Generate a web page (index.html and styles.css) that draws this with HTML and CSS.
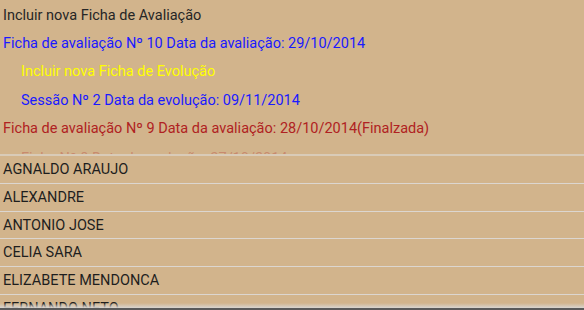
FILE: index.html
```html
<!DOCTYPE html>
<html>
<head>
<meta charset="utf-8">
<link rel="stylesheet" href="styles.css">
</head>
<body>
<div class="screen">
  <ul class="tree">
    <li class="item dark">Incluir nova Ficha de Avaliação</li>
    <li class="item blue">Ficha de avaliação Nº 10 Data da avaliação: 29/10/2014</li>
    <li class="item yellow sub">Incluir nova Ficha de Evolução</li>
    <li class="item blue sub">Sessão Nº 2 Data da evolução: 09/11/2014</li>
    <li class="item red">Ficha de avaliação Nº 9 Data da avaliação: 28/10/2014(Finalzada)</li>
    <li class="item red sub faded">Ficha Nº 8 Data da evolução: 27/10/2014</li>
  </ul>
  <div class="popup">
    <ul class="names">
      <li class="name">AGNALDO ARAUJO</li>
      <li class="name">ALEXANDRE</li>
      <li class="name">ANTONIO JOSE</li>
      <li class="name">CELIA SARA</li>
      <li class="name">ELIZABETE MENDONCA</li>
      <li class="name">FERNANDO NETO</li>
    </ul>
    <div class="fade"></div>
    <div class="edge"></div>
  </div>
</div>
</body>
</html>
```
FILE: styles.css
```css
html, body {
  margin: 0;
  padding: 0;
  background: #d2b48c;
}
.screen {
  position: relative;
  width: 584px;
  height: 310px;
  overflow: hidden;
  background: #d2b48c;
  font-family: Roboto, "Noto Sans", sans-serif;
  font-size: 14.5px;
}
.tree {
  list-style: none;
  margin: 0;
  padding: 2px 0 0 0;
}
.item {
  height: 28.2px;
  line-height: 28px;
  padding-left: 3px;
  white-space: nowrap;
}
.item.sub {
  padding-left: 21px;
}
.dark { color: #262626; }
.blue { color: #1a1aff; }
.yellow { color: #ffff00; }
.red { color: #b02222; }
.faded {
  opacity: 0.28;
  padding-top: 2px;
}

.popup {
  position: absolute;
  top: 154px;
  left: 0;
  right: 0;
  bottom: 0;
  background: #d2b48c;
  border-top: 2px solid #d9cbb8;
}
.names {
  list-style: none;
  margin: 0;
  padding: 0;
}
.name {
  height: 26.8px;
  line-height: 27.6px;
  padding-left: 3px;
  color: #1e1e1e;
  border-bottom: 1px solid #dcd6d0;
  white-space: nowrap;
}
.fade {
  position: absolute;
  left: 0;
  right: 0;
  bottom: 2px;
  height: 5px;
  background: linear-gradient(to bottom, rgba(215,205,195,0), #d8d4d0);
}
.edge {
  position: absolute;
  left: 0;
  right: 0;
  bottom: 0;
  height: 2px;
  background: #5a5a5a;
}
```
